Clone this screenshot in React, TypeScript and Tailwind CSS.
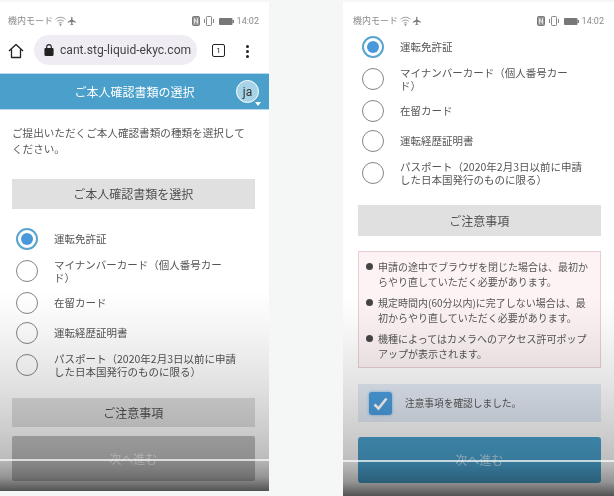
import React from "react";

const jp = "font-['Noto_Sans_CJK_JP','Noto_Sans',sans-serif]";

function StatusBar({ pad }: { pad: string }) {
  return (
    <div className={`flex h-[30px] items-start justify-between pt-[13px] ${pad} text-[#8a8a8a]`}>
      <div className="flex items-center gap-[1px]">
        <span className="text-[9px] leading-[12px]">機内モード</span>
        <svg width="11" height="10" viewBox="0 0 20 18" fill="none" stroke="#8a8a8a" strokeWidth="1.6" className="ml-[1px]">
          <path d="M1 6c5-5 13-5 18 0M4 9.5c3.5-3 8.500-3 12 0M7 13c2-1.500 4-1.500 6 0" />
          <circle cx="10" cy="16" r="1.200" fill="#8a8a8a" />
        </svg>
        <svg width="10" height="10" viewBox="0 0 24 24" fill="#777">
          <path d="M21 16v-2l-8-5V3.500c0-.83-.67-1.500-1.500-1.500S10 2.670 10 3.500V9l-8 5v2l8-2.500V19l-2 1.500V22l3.500-1 3.500 1v-1.500L13 19v-5.500l8 2.500z" />
        </svg>
      </div>
      <div className="flex items-center">
        <svg width="8" height="10" viewBox="0 0 8 10" className="mr-[4px]">
          <rect x="0.500" y="0.500" width="7" height="9" rx="1" fill="#999" stroke="#777" />
          <path d="M2.500 2.500v5M5.500 2.500v5M2.500 3l3 4" stroke="#eee" strokeWidth="0.900" />
        </svg>
        <svg width="11" height="10" viewBox="0 0 11 10" fill="none" stroke="#888" className="mr-[4px]">
          <rect x="2.500" y="0.500" width="5" height="9" rx="0.800" />
          <path d="M0.500 3v4M9.500 3v4" />
        </svg>
        <svg width="15" height="7" viewBox="0 0 15 7" className="mr-[3px]">
          <rect x="0" y="0" width="13.500" height="7" rx="1" fill="#777" />
          <rect x="13.500" y="2" width="1.500" height="3" fill="#777" />
        </svg>
        <span className="font-['Roboto',sans-serif] text-[9px] leading-[12px]">14:02</span>
      </div>
    </div>
  );
}

function Radio({ selected }: { selected?: boolean }) {
  return selected ? (
    <span className="flex h-[22px] w-[22px] shrink-0 items-center justify-center rounded-full border-2 border-[#5aa5cf] bg-white">
      <span className="h-[12px] w-[12px] rounded-full bg-[#4a98dc]" />
    </span>
  ) : (
    <span className="h-[22px] w-[22px] shrink-0 rounded-full border-[1.500px] border-[#858585]" />
  );
}

const options = [
  { t: "運転免許証", h: "h-[30px]", selected: true },
  { t: "マイナンバーカード（個人番号カード）", h: "h-[34px]" },
  { t: "在留カード", h: "h-[30px]" },
  { t: "運転経歴証明書", h: "h-[30px]" },
  { t: "パスポート（2020年2月3日以前に申請した日本国発行のものに限る）", h: "h-[34px]" },
];

function RadioList() {
  return (
    <div className="flex flex-col pl-[16px]">
      {options.map((o) => (
        <div key={o.t} className={`flex items-center ${o.h}`}>
          <Radio selected={o.selected} />
          <span className="ml-[16px] w-[186px] text-[10.500px] leading-[13.500px] text-[#555] [text-spacing-trim:space-all]">{o.t}</span>
        </div>
      ))}
    </div>
  );
}

function GrayButton({ label, cls }: { label: string; cls: string }) {
  return (
    <div className={`mx-[12px] flex w-[242.500px] items-center justify-center bg-[#e0e0e0] text-[12px] text-[#505050] ${cls}`}>
      {label}
    </div>
  );
}

function Overlay({ lineBottom }: { lineBottom: string }) {
  return (
    <>
      <div className="pointer-events-none absolute right-0 bottom-0 left-0 h-[200px] bg-[linear-gradient(to_top,rgba(0,0,0,0.68)_0px,rgba(0,0,0,0.42)_14px,rgba(0,0,0,0.26)_34px,rgba(0,0,0,0.2)_60px,rgba(0,0,0,0.11)_110px,rgba(0,0,0,0.03)_170px,rgba(0,0,0,0)_200px)]" />
      <div className={`pointer-events-none absolute right-0 left-0 h-[2px] bg-white/70 ${lineBottom}`} />
    </>
  );
}

function Bullet({ children }: { children: React.ReactNode }) {
  return (
    <div className="flex">
      <span className="mt-[4px] mr-[5px] h-[7px] w-[7px] shrink-0 rounded-full bg-[#444]" />
      <span className="text-[10px] leading-[15px] text-[#555]">{children}</span>
    </div>
  );
}

export default function App() {
  return (
    <div className={`flex h-[496px] w-[614px] gap-[74px] overflow-hidden bg-[#f5f7f7] pt-[2px] blur-[0.5px] ${jp}`}>
      <div className="relative h-[489px] w-[269px] shrink-0 bg-white">
        <StatusBar pad="pl-[8px] pr-[10px]" />
        <div className="flex h-[41px] items-start pt-[3px] pl-[8px]">
          <svg width="16" height="16" viewBox="0 0 16 16" fill="none" stroke="#222" strokeWidth="1.300" className="mt-[8px]">
            <path d="M1 8l7-6.500L15 8M3.500 6.500V14.500h9V6.500" strokeLinejoin="round" />
          </svg>
          <div className="ml-[10px] flex h-[30px] w-[163px] items-center rounded-full bg-[#efedf3] pl-[10px]">
            <svg width="10" height="12" viewBox="4 1 16 21" fill="#222" className="shrink-0">
              <path d="M18 8h-1V6c0-2.760-2.240-5-5-5S7 3.240 7 6v2H6c-1.100 0-2 .9-2 2v10c0 1.100.9 2 2 2h12c1.100 0 2-.9 2-2V10c0-1.100-.9-2-2-2zM9 6c0-1.660 1.340-3 3-3s3 1.340 3 3v2H9V6z" />
            </svg>
            <span className="ml-[6px] font-['Roboto',sans-serif] text-[12.100px] leading-[16px] whitespace-nowrap text-[#444]">cant.stg-liquid-ekyc.com</span>
          </div>
          <span className="mt-[9px] ml-[15px] flex h-[13px] w-[13px] items-center justify-center rounded-[2px] border-[1.500px] border-[#222] font-['Roboto',sans-serif] text-[8px] text-[#222]">1</span>
          <div className="mt-[10px] ml-[21px] flex flex-col gap-[2px]">
            <span className="h-[3px] w-[3px] rounded-full bg-[#222]" />
            <span className="h-[3px] w-[3px] rounded-full bg-[#222]" />
            <span className="h-[3px] w-[3px] rounded-full bg-[#222]" />
          </div>
        </div>
        <div className="relative flex h-[37px] items-center justify-center border-y border-[#b9d9ea] bg-[#4a9fcb] text-[12px] text-white">
          ご本人確認書類の選択
          <span className="absolute top-[6px] right-[10px] flex h-[23px] w-[23px] items-center justify-center rounded-full border border-white bg-[#a6d3e6] font-['Roboto',sans-serif] text-[12px] text-[#333]">ja</span>
          <span className="absolute top-[28px] right-[8px] h-0 w-0 border-x-[3px] border-t-[4px] border-x-transparent border-t-white" />
        </div>
        <p className="mt-[15px] pr-[20px] pl-[12px] text-[10.600px] leading-[16px] text-[#555]">ご提出いただくご本人確認書類の種類を選択してください。</p>
        <GrayButton label="ご本人確認書類を選択" cls="mt-[22px] h-[30px]" />
        <div className="mt-[15px]"><RadioList /></div>
        <GrayButton label="ご注意事項" cls="mt-[16px] h-[29px]" />
        <div className="mx-[12px] mt-[9px] flex h-[45px] w-[242.500px] items-center justify-center rounded-[2px] bg-[#c2c2c2] text-[12px] text-white/70">次へ進む</div>
        <Overlay lineBottom="bottom-[30px]" />
      </div>

      <div className="relative h-[494px] w-[271px] shrink-0 bg-white">
        <StatusBar pad="pl-[10px] pr-[10px]" />
        <div className="pl-[3px]"><RadioList /></div>
        <div className="mt-[15px] ml-[3px]"><GrayButton label="ご注意事項" cls="h-[31px]" /></div>
        <div className="mx-[15px] mt-[15px] flex h-[117px] w-[242.500px] flex-col gap-[6px] border border-[#e8ced4] bg-[#fdf3f4] pt-[7px] pr-[10px] pl-[7px]">
          <Bullet>申請の途中でブラウザを閉じた場合は、最初からやり直していただく必要があります。</Bullet>
          <Bullet>規定時間内(60分以内)に完了しない場合は、最初からやり直していただく必要があります。</Bullet>
          <Bullet>機種によってはカメラへのアクセス許可ポップアップが表示されます。</Bullet>
        </div>
        <div className="mx-[15px] mt-[16px] flex h-[38px] w-[242.500px] items-center bg-[#e4ecf6] pl-[11px]">
          <span className="flex h-[23px] w-[23px] items-center justify-center rounded-[3px] bg-[#4c9fe0] shadow-[0_0_3px_#7ab8e8]">
            <svg width="17" height="17" viewBox="0 0 17 17" fill="none" stroke="white" strokeWidth="2.600"><path d="M2.500 9.500l4 4L14.500 3.500" /></svg>
          </span>
          <span className="ml-[13px] text-[9.700px] text-[#555]">注意事項を確認しました。</span>
        </div>
        <div className="mx-[15px] mt-[15px] flex h-[46px] w-[242.500px] items-center justify-center rounded-[3px] bg-[#4aa3d0] text-[12px] text-white/60">次へ進む</div>
        <Overlay lineBottom="bottom-[34px]" />
      </div>
    </div>
  );
}
